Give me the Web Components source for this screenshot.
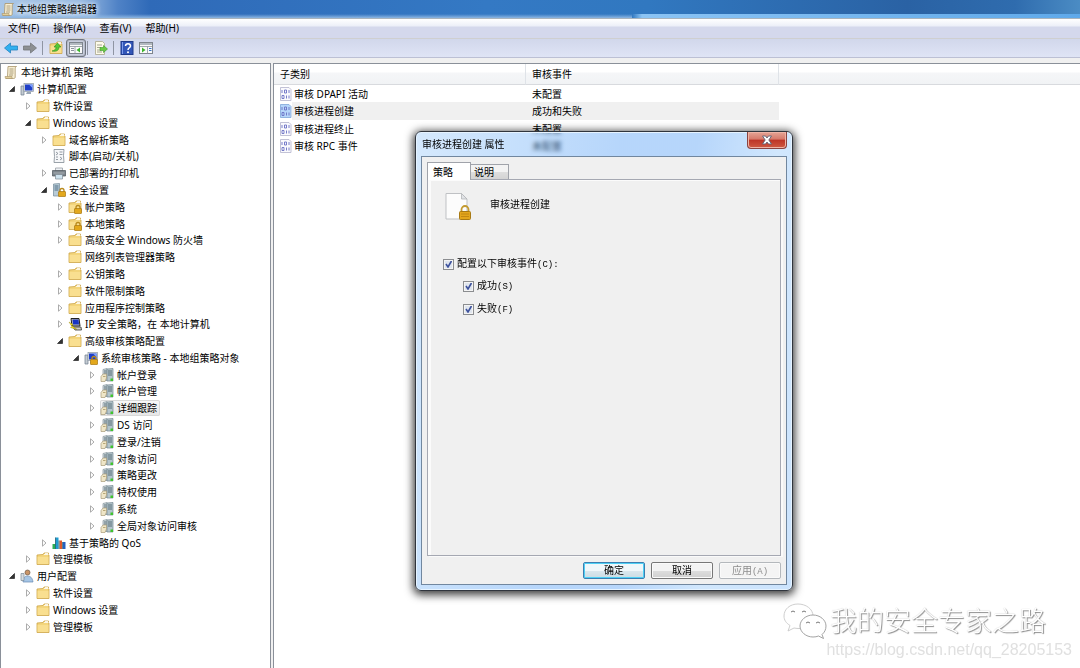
<!DOCTYPE html>
<html lang="zh-CN">
<head>
<meta charset="utf-8">
<title>本地组策略编辑器</title>
<style>
  html, body { margin: 0; height: 100%; }
  body { font: 10px/16px "Noto Sans", "Noto Sans CJK SC", sans-serif; color: #000; background: #fff; overflow: hidden; }
</style>
</head>
<body>
<gp-window></gp-window>

<script>
const bits = '<path d="M3 3v3M5.500 3h2v3h-2zM10 3v3M3 8.500h2v3H3zM7.500 8.500v3M10 8.500v3" fill="none" stroke="#6a6fc4" stroke-width=".9"/>';
const folder = '<path d="M1 3l6-.5 1-1.500h4.500v2h.5v9.500H1z" fill="#f3d57c" stroke="#cda548" stroke-width=".8"/><path d="M8 2.500h4.500M9 1.500h3" stroke="#fff" stroke-width=".8"/><path d="M1.500 5h11v7h-11z" fill="#fbe298" opacity=".7"/>';
const lock = '<path d="M8 9V7.500a2 2 0 0 1 4 0V9" fill="none" stroke="#b98a1c" stroke-width="1.300"/><rect x="6.500" y="8.500" width="7" height="5" rx=".5" fill="#e3a81c" stroke="#a87710" stroke-width=".7"/>';
const monitor = '<path d="M1 4h3v9H1z" fill="#c4cbd2" stroke="#6e7d8c" stroke-width=".7"/><rect x="4" y="1.500" width="9.500" height="8" fill="#dfe4e8" stroke="#8c98a4" stroke-width=".7"/><rect x="5" y="2.500" width="7.500" height="6" fill="#1f3fc8"/><path d="M9 2.500h3.500V6z" fill="#7fa2ff"/><path d="M7 10h4v2H6z" fill="#99a6b5"/>';
const ICONS = {
  folder,
  folderLock: folder + lock,
  scroll: '<path d="M4 1.500h8.500c-1 .5-1.300 1.200-1.300 2.500v8c0 1-.7 1.500-1.500 1.500H2c1.300-.5 1.500-1 1.500-2z" fill="#f7eed2" stroke="#a8946a" stroke-width=".8"/><path d="M5.500 4h4M5.500 6h4M5.500 8h4M5 10h4" stroke="#9a8a68" stroke-width=".8"/><path d="M1 11.500h7v2H1.500z" fill="#e2cf9a" stroke="#a8946a" stroke-width=".6"/>',
  computer: monitor,
  computerLock: monitor + lock,
  script: '<path d="M2 .5h10l-.5 6 .5 7H2l.5-6z" fill="#f6f7f9" stroke="#8f979f" stroke-width=".9"/><path d="M4 3l2 1.500L4 6M7.500 3h3M7.500 5.500h3M4 8h2M8 8l2 1.500L8 11M4 10.500h2" fill="none" stroke="#7d868f" stroke-width=".8"/>',
  printer: '<path d="M3.500 2h7v3h-7z" fill="#eef1f4" stroke="#8d949b" stroke-width=".7"/><path d="M.5 4.500h13v5.500H.5z" fill="#7d858c" stroke="#4d545a" stroke-width=".7"/><path d="M1.500 7h11" stroke="#aab0b5"/><path d="M3.500 8.500h7V13h-7z" fill="#cfe3ef" stroke="#7f8b93" stroke-width=".7"/>',
  serverLock: '<path d="M1.500 1l6-.5v12.500h-6z" fill="#b8cbd6" stroke="#73899a" stroke-width=".7"/><path d="M2.500 3h4M2.500 5h4M2.500 7h4" stroke="#4f6f86"/>' + lock,
  server: '<path d="M3 1.500l4-1v12H3z" fill="#cfd9dd" stroke="#84949b" stroke-width=".7"/><path d="M7 1l6-.5v12.500H7z" fill="#b4c5cc" stroke="#74878f" stroke-width=".7"/><path d="M4 3h2.500M4 5h2.500M8 3h4M8 5h4M8 7h4" stroke="#566c76"/><path d="M1 8.500L3 6h3.500v4L5 13.500H1z" fill="#efe6c8" stroke="#a99c7a" stroke-width=".7"/><path d="M3 8.500h2.500" stroke="#b9a878"/><rect x="10.500" y="10.500" width="2.500" height="2.500" fill="#3fc52c"/>',
  ipsec: '<path d="M3 1.500h8l1 7.500H4z" fill="#c3c3bb" stroke="#222"/><path d="M4.500 2.500h6l.5 5H5z" fill="#1634c4"/><path d="M5 10h8l.5 3H7z" fill="#d0cfc4" stroke="#333" stroke-width=".8"/><path d="M1 5l4 2.500-1.500 1L9 12.500 2.500 10.500 4 9.500z" fill="#ffe81e" stroke="#8d7f00" stroke-width=".4"/>',
  chart: '<path d="M.5 8h3v5h-3z" fill="#2cae54"/><path d="M3.500 1.500h3V13h-3z" fill="#1f9cd0"/><path d="M7.500 4.500H10V13H7.500z" fill="#e05a2c"/><path d="M11 6h2.500v7H11z" fill="#2461c0"/><path d="M3.500 1.500v11.500M7 4.500V13M10.500 6v7" stroke="#164a62" stroke-width=".7"/>',
  user: '<circle cx="7.500" cy="3.500" r="2.500" fill="#c99467" stroke="#6f5a48" stroke-width=".7"/><path d="M3 13c0-4 1.500-6 4.500-6s5 2 5.500 6z" fill="#a6c6e6" stroke="#6488b0" stroke-width=".7"/><path d="M1 4.500h3v7H1z" fill="#d5dce2" stroke="#7b8995" stroke-width=".7"/>',
  audit: '<path d="M1.500 .5H10l2 2v11H1.500z" fill="#fafafd" stroke="#b3b3cc" stroke-width=".8"/>' + bits,
  auditOn: '<path d="M1.500 .5H10l2 2v11H1.500z" fill="#b6d6fa" stroke="#7fa6d8" stroke-width=".8"/>' + bits,
  back: '<path d="M.5 7L6.500 2v3H13.500v4H6.500v3z" fill="#31b0f0" stroke="#2583bf" stroke-width=".8"/>',
  forward: '<path d="M13.500 7L7.500 2v3H.5v4h7v3z" fill="#8d9093" stroke="#74777a" stroke-width=".8"/>',
  up: folder + '<path d="M3 10c3-.5 4-2 4-4H5l3.500-4L12 6h-2c0 3-2 5-7 4z" fill="#55c935" stroke="#2c8c1b" stroke-width=".6"/>',
  panes: '<rect x=".5" y="1.500" width="13" height="11" fill="#fafafa" stroke="#7e858d"/><path d="M1 3h12" stroke="#9aa3ad" stroke-width="1.500"/><path d="M1 5.500h12M6 5.500v7" stroke="#8b939c" stroke-width=".8"/><path d="M2 7.500h3M2 9.500h3" stroke="#8b939c"/><path d="M11 6.500v5L7.500 9z" fill="#3cb52d"/>',
  export: '<path d="M1.500 .5h7l2 2v11h-9z" fill="#fdfbe9" stroke="#aaa68b" stroke-width=".8"/><path d="M3 4h5M3 6.500h4M3 9h4M3 11h5" stroke="#8f8f80" stroke-width=".8"/><path d="M6 6.500h3.500V4.500L13.500 8l-4 3.500v-2H6z" fill="#6acb48" stroke="#3c9a26" stroke-width=".6"/>',
  help: '<rect x="1" y=".5" width="12" height="13" fill="#3256b8" stroke="#1e3a8c"/><path d="M2.500 1v12" stroke="#7d9cec"/><path d="M5.500 5c0-3 5-3 5 0 0 1.800-2.500 1.800-2.500 4" fill="none" stroke="#fff" stroke-width="1.500"/><circle cx="8" cy="11.200" r="1" fill="#fff"/>',
  action: '<rect x=".5" y="1.500" width="13" height="11" fill="#fafafa" stroke="#7e858d"/><path d="M1 3h12" stroke="#9aa3ad" stroke-width="1.500"/><path d="M1 5.500h12M8.500 5.500v7" stroke="#8b939c" stroke-width=".8"/><path d="M10 7.500h2.500M10 9.500h2.500" stroke="#3b76c8"/><path d="M3 6.500v5L6.500 9z" fill="#3cb52d"/>'
};

const define = (name, html, ready) => {
  const template = document.createElement('template');
  template.innerHTML = html;
  customElements.define(name, class extends HTMLElement {
    connectedCallback() {
      if (this.shadowRoot) return;
      this.attachShadow({ mode: 'open' }).append(template.content.cloneNode(true));
      if (ready) ready(this, this.shadowRoot);
    }
  });
};

define('gp-icon', `
<style>:host { display: block; flex: none; width: 14px; height: 14px; } svg { display: block; width: 100%; height: 100%; }</style>
<svg viewBox="0 0 14 14" aria-hidden="true"></svg>`,
(el, root) => { root.querySelector('svg').innerHTML = ICONS[el.getAttribute('name')]; });

define('gp-titlebar', `
<style>
  :host { display: flex; align-items: center; gap: 2px; height: 18px; padding-left: 1px; border-bottom: 1px solid #aab4bd;
    background:
      linear-gradient(90deg, transparent 632px, #8cc4f4 642px, #5fa9ea) left bottom / 100% 4px no-repeat,
      linear-gradient(transparent, #8db6e2) left bottom / 632px 4px no-repeat,
      linear-gradient(90deg, #a9c6e6 0, #9bbce2 80px, #4f82c6 118px, #2f6ab8 150px, #3479c4 45%, #3178c0 60%, #2a62a4 84%, #2f6cae 94%, #4b8cc4); }
  h1 { margin: 0; font-size: 10px; font-weight: 400; line-height: 18px; color: #000; text-shadow: 0 0 5px #fff, 0 0 5px #dcebfa; }
</style>
<gp-icon name="scroll"></gp-icon><h1><slot></slot></h1>`);

define('gp-menubar', `
<style>
  :host { display: block; border-bottom: 1px solid #cfcfd0; background: linear-gradient(#fff, #eceff8 7px, #d4d8ec 8px); }
  nav { display: flex; gap: 14px; height: 19px; padding-left: 8px; }
  button { all: unset; line-height: 19px; }
</style>
<nav><button>文件(F)</button><button>操作(A)</button><button>查看(V)</button><button>帮助(H)</button></nav>`);

define('gp-toolbar', `
<style>
  :host { display: flex; align-items: center; height: 18px; padding-left: 4px; border-bottom: 1px solid #bcc0d4; background: linear-gradient(#d1d7eb, #dfe4f5); }
  button { all: unset; display: grid; place-items: center; width: 14px; height: 18px; margin-right: 5px; }
  button.up { margin-right: 3px; }
  button.on { box-sizing: border-box; width: 20px; border: 1px solid #70757f; border-radius: 3px; margin: 0; background: #cdd2e2; box-shadow: inset 0 0 2px #767b85; }
  i { width: 1px; height: 14px; background: #8f95a3; margin: 0 6px 0 0; }
  i.near { margin-left: 1px; }
</style>
<button aria-label="后退"><gp-icon name="back"></gp-icon></button>
<button aria-label="前进"><gp-icon name="forward"></gp-icon></button>
<i></i>
<button class="up" aria-label="上一级"><gp-icon name="up"></gp-icon></button>
<button class="on" aria-label="显示控制台树"><gp-icon name="panes"></gp-icon></button>
<i class="near"></i>
<button aria-label="导出列表"><gp-icon name="export"></gp-icon></button>
<i></i>
<button aria-label="帮助"><gp-icon name="help"></gp-icon></button>
<button aria-label="操作窗格"><gp-icon name="action"></gp-icon></button>`);

define('gp-node', `
<style>
  :host { display: flex; align-items: center; min-height: 0; white-space: nowrap; }
  .arrow { flex: none; width: 16px; height: 8px; }
  .arrow svg { display: block; width: 8px; height: 8px; margin: 0 auto; }
  .label { display: flex; align-items: center; gap: 3px; height: 16px; padding-right: 3px; border-radius: 2px; }
  .label span { line-height: 16px; }
  :host([selected]) .label { background: linear-gradient(#fafafa, #e6e6e6); box-shadow: inset 0 0 0 1px #d9d9d9; }
</style>
<div class="arrow"></div>
<div class="label"><span><slot></slot></span></div>`,
(el, root) => {
  const depth = Number(el.getAttribute('depth'));
  const arrow = root.querySelector('.arrow');
  el.style.paddingLeft = 3 + 16 * Math.max(0, depth - 1) + 'px';
  if (!depth) arrow.remove();
  const shapes = {
    open: '<svg viewBox="0 0 8 8"><path d="M6.500 1.500v5h-5z" fill="#333" stroke="#111" stroke-width=".6"/></svg>',
    closed: '<svg viewBox="0 0 8 8"><path d="M2.500 .8L6 4 2.500 7.200z" fill="#fff" stroke="#a3a3a3" stroke-width=".9"/></svg>'
  };
  arrow.innerHTML = shapes[el.getAttribute('state')] || '';
  const icon = document.createElement('gp-icon');
  icon.setAttribute('name', el.getAttribute('icon'));
  root.querySelector('.label').prepend(icon);
});

const NODES = [
  [0, 'scroll', '', '本地计算机 策略'],
  [1, 'computer', 'open', '计算机配置'],
  [2, 'folder', 'closed', '软件设置'],
  [2, 'folder', 'open', 'Windows 设置'],
  [3, 'folder', 'closed', '域名解析策略'],
  [3, 'script', '', '脚本(启动/关机)'],
  [3, 'printer', 'closed', '已部署的打印机'],
  [3, 'serverLock', 'open', '安全设置'],
  [4, 'folderLock', 'closed', '帐户策略'],
  [4, 'folderLock', 'closed', '本地策略'],
  [4, 'folder', 'closed', '高级安全 Windows 防火墙'],
  [4, 'folder', '', '网络列表管理器策略'],
  [4, 'folder', 'closed', '公钥策略'],
  [4, 'folder', 'closed', '软件限制策略'],
  [4, 'folder', 'closed', '应用程序控制策略'],
  [4, 'ipsec', 'closed', 'IP 安全策略，在 本地计算机'],
  [4, 'folder', 'open', '高级审核策略配置'],
  [5, 'computerLock', 'open', '系统审核策略 - 本地组策略对象'],
  [6, 'server', 'closed', '帐户登录'],
  [6, 'server', 'closed', '帐户管理'],
  [6, 'server', 'closed', '详细跟踪', true],
  [6, 'server', 'closed', 'DS 访问'],
  [6, 'server', 'closed', '登录/注销'],
  [6, 'server', 'closed', '对象访问'],
  [6, 'server', 'closed', '策略更改'],
  [6, 'server', 'closed', '特权使用'],
  [6, 'server', 'closed', '系统'],
  [6, 'server', 'closed', '全局对象访问审核'],
  [3, 'chart', 'closed', '基于策略的 QoS'],
  [2, 'folder', 'closed', '管理模板'],
  [1, 'user', 'open', '用户配置'],
  [2, 'folder', 'closed', '软件设置'],
  [2, 'folder', 'closed', 'Windows 设置'],
  [2, 'folder', 'closed', '管理模板']
];

define('gp-tree', `
<style>
  :host { display: block; }
  .rows { display: grid; grid-auto-rows: 1fr; height: 571px; }
</style>
<div class="rows" role="tree"></div>`,
(el, root) => {
  const rows = root.querySelector('.rows');
  for (const [depth, icon, state, text, selected] of NODES) {
    const node = document.createElement('gp-node');
    node.setAttribute('role', 'treeitem');
    node.setAttribute('depth', depth);
    node.setAttribute('icon', icon);
    node.setAttribute('state', state);
    if (selected) node.setAttribute('selected', '');
    node.textContent = text;
    rows.append(node);
  }
});

define('gp-list', `
<style>
  :host { display: block; }
  table { width: 100%; border-collapse: separate; border-spacing: 0; table-layout: fixed; }
  th, td { padding: 0 0 0 5px; text-align: left; font-weight: 400; white-space: nowrap; height: 17px; line-height: 16px; box-sizing: border-box; }
  th { height: 21px; border-right: 1px solid #dfe3e8; border-bottom: 1px solid #d8dade; background: linear-gradient(#fff 8px, #f5f6f8 9px, #f1f3f5); }
  th:last-child { border-right: 0; }
  th:first-child { padding-left: 6px; }
  th + th, td + td { padding-left: 6px; }
  .name { width: 252px; } .value { width: 253px; }
  tbody tr:nth-child(even) td { height: 18px; }
  .cell { display: flex; align-items: center; gap: 1px; }
  tr.on td { background: #f0f0f0; }
  tr.on td:first-child { background: linear-gradient(90deg, #fff 18px, #f0f0f0 18px); }
  tr.on td:last-child { background: none; }
</style>
<table>
  <colgroup><col class="name"><col class="value"><col></colgroup>
  <thead><tr><th>子类别</th><th>审核事件</th><th></th></tr></thead>
  <tbody>
    <tr><td><div class="cell"><gp-icon name="audit"></gp-icon>审核 DPAPI 活动</div></td><td>未配置</td><td></td></tr>
    <tr class="on"><td><div class="cell"><gp-icon name="auditOn"></gp-icon>审核进程创建</div></td><td>成功和失败</td><td></td></tr>
    <tr><td><div class="cell"><gp-icon name="audit"></gp-icon>审核进程终止</div></td><td>未配置</td><td></td></tr>
    <tr><td><div class="cell"><gp-icon name="audit"></gp-icon>审核 RPC 事件</div></td><td>未配置</td><td></td></tr>
  </tbody>
</table>`);

define('gp-check', `
<style>
  :host { display: block; }
  label { display: flex; align-items: center; gap: 3px; height: 16px; }
  input { appearance: none; flex: none; width: 11px; height: 11px; margin: 0; border: 1px solid #8b8d90; box-shadow: inset 0 0 0 1px #f4f4f4;
    background: #dfe5ee url("data:image/svg+xml,%3Csvg xmlns='http://www.w3.org/2000/svg' viewBox='0 0 9 9'%3E%3Cpath d='M2 4l2 3 3.500-6' fill='none' stroke='%233d519c' stroke-width='1.600'/%3E%3C/svg%3E") center / 9px 9px no-repeat; }
  .key { font: 9px/16px "Liberation Mono", monospace; }
</style>
<label><input type="checkbox" checked><span><slot></slot><span class="key"></span></span></label>`,
(el, root) => { root.querySelector('.key').textContent = el.getAttribute('key'); });

define('gp-button', `
<style>
  :host { display: block; }
  button { display: block; box-sizing: border-box; width: 62px; height: 17px; padding: 0; border: 1px solid #777; border-radius: 2px; font: inherit; line-height: 15px; color: #000;
    background: linear-gradient(#f3f3f3 50%, #dedede 50%, #d0d0d0); box-shadow: inset 0 0 0 1px #fafafa; }
  :host([primary]) button { border-color: #3c7fb1; box-shadow: inset 0 0 0 1px #4fd0f5; background: linear-gradient(#f0f7fa 50%, #dbe8ee 50%, #cadce4); }
  button:disabled { border-color: #b4b8bc; color: #8d8d8d; background: #f4f4f4; }
  .key { font: 9px/15px "Liberation Mono", monospace; }
</style>
<button type="button"><slot></slot><span class="key"></span></button>`,
(el, root) => {
  root.querySelector('button').disabled = el.hasAttribute('disabled');
  root.querySelector('.key').textContent = el.getAttribute('key') || '';
});

define('gp-dialog', `
<style>
  :host { display: block; box-sizing: border-box; width: 378px; border: 1px solid #30353d; border-radius: 6px; overflow: visible;
    box-shadow: 0 2px 9px 2px rgba(0,0,0,.75), inset 0 0 0 1px #e6f3ff;
    background: linear-gradient(100deg, rgba(150,200,250,.4), rgba(73,152,245,.4) 45%, rgba(73,152,245,.4) 62%, rgba(140,195,250,.4) 80%, rgba(125,185,250,.4));
    backdrop-filter: blur(2px); }
  header { display: flex; justify-content: space-between; height: 24px; padding: 0 5px 0 6px; }
  h2 { margin: 0; font-size: 10px; font-weight: 400; line-height: 24px; }
  .close { box-sizing: border-box; display: grid; place-items: center; width: 40px; height: 17px; padding: 0; border: 1px solid #8a4340; border-top: 0; border-radius: 0 0 4px 4px;
    background: linear-gradient(#e5a596, #d6796a 45%, #bd3426 50%, #cf5a43); box-shadow: inset 0 0 0 1px #eeb4a6; }
  .close svg { width: 12px; height: 10px; }
  .body { margin: 0 5px 5px; border: 1px solid #71879f; background: #f0f0f0; padding: 5px; }
  .tabs { display: flex; align-items: flex-end; height: 17px; }
  .tabs button { box-sizing: border-box; height: 15px; width: 38px; padding: 0 0 0 3px; text-align: left; font: inherit; line-height: 14px; border: 1px solid #a0a3aa; border-bottom: 0; border-left: 0; background: linear-gradient(#f3f3f3 50%, #dedede 50%, #d4d4d4); color: #000; }
  .tabs .on { position: relative; width: 44px; height: 18px; margin-bottom: -1px; padding: 0 0 0 5px; line-height: 16px; border-left: 1px solid #a0a3aa; background: #fff; }
  .panel { box-sizing: border-box; height: 377px; border: 1px solid #a5a8b2; box-shadow: inset 3px 1px 0 #fbfbfb, 2px 1px 0 #fafafa; padding: 12px 14px 0; }
  .head { display: flex; gap: 18px; height: 30px; padding-left: 3px; }
  .head svg { width: 27px; height: 30px; }
  .head span { line-height: 24px; }
  gp-check + gp-check { margin-top: 7px; }
  .main { margin: 34px 0 6px 1px; }
  .sub { padding-left: 21px; }
  footer { display: flex; justify-content: flex-end; gap: 6px; padding-top: 6px; }
</style>
<header><h2>审核进程创建 属性</h2>
  <button class="close" aria-label="关闭"><svg viewBox="0 0 12 10"><path d="M1.500 1h3L6 3l1.500-2h3L7.800 5l2.700 4h-3L6 7 4.500 9h-3l2.700-4z" fill="#fff" stroke="#5c6376" stroke-width=".9"/></svg></button>
</header>
<div class="body">
  <div class="tabs" role="tablist"><button class="on" role="tab">策略</button><button role="tab">说明</button></div>
  <div class="panel">
    <div class="head">
      <svg viewBox="0 0 27 30" aria-hidden="true"><path d="M1 1.500h15.500L22 7v20H1z" fill="#fcfcfc" stroke="#bfc1c4"/><path d="M16.500 1.500V7H22z" fill="#e1e3e6" stroke="#b3b5b8" stroke-width=".8"/><path d="M16.500 20v-2.500a3.500 3.500 0 0 1 7 0V20" fill="none" stroke="#c39a2f" stroke-width="1.800"/><rect x="14.500" y="19.500" width="11" height="8" rx="1" fill="#e3a61c" stroke="#a87a14"/><path d="M16 22h8M16 24.500h8" stroke="#c28812"/></svg>
      <span>审核进程创建</span>
    </div>
    <div class="main"><gp-check key="(C):">配置以下审核事件</gp-check></div>
    <div class="sub"><gp-check key="(S)">成功</gp-check><gp-check key="(F)">失败</gp-check></div>
  </div>
  <footer><gp-button primary>确定</gp-button><gp-button>取消</gp-button><gp-button disabled key="(A)">应用</gp-button></footer>
</div>`);

define('gp-watermark', `
<style>
  :host { display: grid; justify-items: end; }
  .brand { display: flex; align-items: center; gap: 3px; margin-right: 26px; font-size: 27px; line-height: 32px; font-weight: 300; color: #fff; text-shadow: 1px 1px 1px #8a8a8a, 0 0 1px #c4c4c4; }
  svg { width: 44px; height: 36px; }
  .url { font: 16px/22px "Liberation Sans", sans-serif; color: #e0e0e0; }
</style>
<div class="brand">
  <svg viewBox="0 0 44 36" aria-hidden="true"><g fill="#fff" stroke-width=".9"><path d="M15 1C7 1 1 6 1 13c0 4 2 7 6 9.500L5 28l6-3c2 .5 4 .5 6 .5C24 25 30 20 30 13S23 1 15 1z" stroke="#c8c8c8"/><path d="M30 12c-7 0-13 5-13 11s6 11 13 11c2 0 4-.3 5.500-1l5 2.500-1.500-4c2.500-2 4-5 4-8.500 0-6-6-11-13-11z" stroke="#999"/></g><path d="M8 9q2-2 4 0M19 9q2-2 4 0M23 20q2-2 4 0M33 20q2-2 4 0" fill="none" stroke="#777"/></svg>
  <span>我的安全专家之路</span>
</div>
<span class="url">https://blog.csdn.net/qq_28205153</span>`);

define('gp-window', `
<style>
  :host { display: flex; flex-direction: column; height: 100vh; position: relative; overflow: hidden; background: #f0f0f0; }
  main { flex: 1; min-height: 0; display: grid; grid-template-columns: 271px 1fr; gap: 2px; padding-top: 5px; }
  gp-tree, gp-list { min-height: 0; overflow: hidden; background: #fff; border: 1px solid #8a9099; border-bottom: 0; }
  gp-list { border-right: 0; }
  gp-dialog { position: absolute; left: 415px; top: 131px; }
  gp-watermark { position: absolute; right: 8px; bottom: 7px; }
</style>
<gp-titlebar>本地组策略编辑器</gp-titlebar>
<gp-menubar></gp-menubar>
<gp-toolbar></gp-toolbar>
<main><gp-tree></gp-tree><gp-list></gp-list></main>
<gp-dialog role="dialog" aria-label="审核进程创建 属性"></gp-dialog>
<gp-watermark></gp-watermark>`);
</script>
</body>
</html>
